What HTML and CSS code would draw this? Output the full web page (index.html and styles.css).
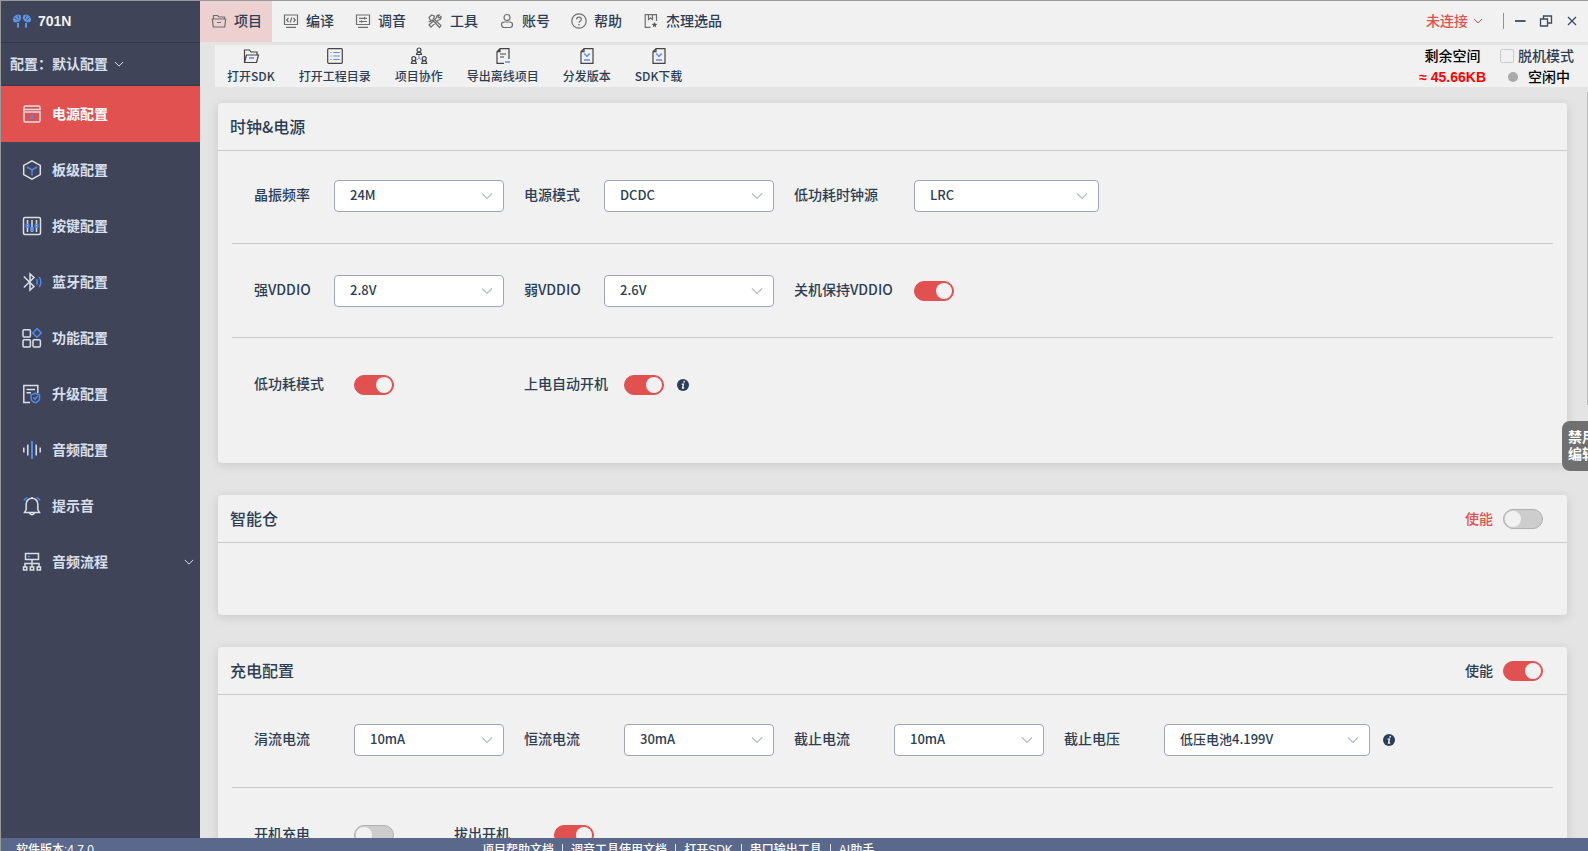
FILE: index.html
```html
<!DOCTYPE html>
<html lang="zh-CN">
<head>
<meta charset="utf-8">
<title>701N</title>
<link rel="stylesheet" href="styles.css">
</head>
<body>
<svg class="sprite" aria-hidden="true">
  <symbol id="chevron" viewBox="0 0 12 12"><path d="M1 3.5 6 8.5 11 3.5" fill="none" stroke="currentColor" stroke-width="1.2"/></symbol>
  <symbol id="info" viewBox="0 0 12 12"><circle cx="6" cy="6" r="6" fill="currentColor"/><path d="M7.3 1.9 6.9 3.6M4.6 5.1H6.4L5.6 9H7.2" fill="none" stroke="#f1f1f1" stroke-width="1.4"/></symbol>
  <symbol id="page-down" viewBox="0 0 18 18"><path d="M6 1.7h9v14.6H3V4.7zM6 1.7v3H3" fill="none" stroke="#444" stroke-width="1.2"/><path d="M6.3 6.5 9 9.5l2.700-3M6 13h6" fill="none" stroke="#5b8def" stroke-width="1.5"/></symbol>
</svg>
<div class="app">
  <aside class="sidebar">
    <div class="brand">
      <svg class="brand-icon" viewBox="0 0 20 16"><g fill="#5a97ea"><path d="M.8 6.500 2 3.500 5 1.500 8.500 2 9.300 5 7.800 8 4.500 9.500 1.800 9z"/><path d="M19.200 6.500 18 3.500 15 1.500 11.500 2 10.700 5 12.200 8 15.500 9.500 18.200 9z"/><path d="M5 10h2v4.500H5zM13 10h2v4.500h-2z"/></g><path d="M2.500 4.500l3 2.500M5.500 2.500 7 5.500M17.500 4.500l-3 2.500M14.500 2.500 13 5.500" stroke="#3f4459" stroke-width=".9"/></svg>
      <span>701N</span>
    </div>
    <button class="profile" type="button"><span>配置：默认配置</span><svg class="chev small"><use href="#chevron"/></svg></button>
    <nav class="side-nav">
      <a class="side-link active" href="#"><svg viewBox="0 0 20 20"><path d="M2 7V3.500Q2 2 3.500 2h13Q18 2 18 3.500V5.500H2M2 8h16v8.500Q18 18 16.500 18h-13Q2 18 2 16.500z"/><path class="bolt" d="M10.500 9.500 7 13.300h2.300v3.200l3.500-4h-2.300z"/></svg><span>电源配置</span></a>
      <a class="side-link" href="#"><svg viewBox="0 0 20 20"><path d="M10 .8 18.300 5.400v9.200L10 19.200 1.700 14.600V5.400z"/><path class="b" d="M5 7l5 3 5-3M10 10v5.500"/></svg><span>板级配置</span></a>
      <a class="side-link" href="#"><svg viewBox="0 0 20 20"><rect x="1.500" y="1.500" width="17" height="17" rx="1.500"/><path d="M5.500 4v12M10 4v12M14.500 4v12"/><path class="b" d="M4.200 8.500h2.600v2.600H4.200zM8.700 12h2.600v2.400H8.700zM13.200 8.500h2.600v2.600h-2.600z"/></svg><span>按键配置</span></a>
      <a class="side-link" href="#"><svg viewBox="0 0 20 20"><path d="M1.800 4.500 12 14.500 8 18V2l4 3.500L1.800 15.500"/><path class="b" d="M14.500 7.200q1.600 2.800 0 5.600M17.300 4.800q3 5.200 0 10.400"/></svg><span>蓝牙配置</span></a>
      <a class="side-link" href="#"><svg viewBox="0 0 20 20"><rect x="1" y="1.800" width="7.400" height="7.200" rx="1.200"/><rect x="1" y="11.800" width="7.400" height="7.200" rx="1.200"/><rect x="11" y="11.800" width="7.400" height="7.200" rx="1.200"/><path class="b" d="M15 .6l4.300 4.300L15 9.200l-4.300-4.300z"/></svg><span>功能配置</span></a>
      <a class="side-link" href="#"><svg viewBox="0 0 20 20"><path d="M8 18.500H1.800V1.500h14V9M4.500 5.500h8.500M4.500 8.700h4.500"/><path class="b" d="M13.300 9.300 17.500 10.700v3.500q0 3-4.200 4.600-4.200-1.600-4.200-4.600v-3.500zM11.300 13.500l1.600 1.600 2.800-3"/></svg><span>升级配置</span></a>
      <a class="side-link" href="#"><svg viewBox="0 0 20 20"><path d="M1.800 7.500v5M5.800 4.500v11M14.200 4.500v11M18.200 7.500v5"/><path class="b" d="M10 1v18" stroke-width="2"/></svg><span>音频配置</span></a>
      <a class="side-link" href="#"><svg viewBox="0 0 20 20"><path d="M2.500 16.500H17.500L15.800 13.500V8A5.800 5.800 0 0 0 4.200 8v5.500zM7.500 17q2.500 3.500 5 0M10 2.200V1"/><path class="b" d="M1.800 4.500 5 1.200M18.200 4.500 15 1.200"/></svg><span>提示音</span></a>
      <a class="side-link" href="#"><svg viewBox="0 0 20 20"><path d="M3.500 1.500h13v6h-13zM10 7.500V15M3 15v-3.500h14V15M1.500 15h3.300v3H1.500zM8.300 15h3.400v3H8.300zM15.200 15h3.300v3h-3.300z"/><path class="b" d="M6 4.500h2"/></svg><span>音频流程</span><svg class="chev small"><use href="#chevron"/></svg></a>
    </nav>
  </aside>
  <div class="main">
    <header class="topbar">
      <nav class="menu">
        <a class="menu-link active" href="#"><svg viewBox="0 0 16 16"><path d="M2.500 6V2.500h4L8 4h5.500v2M1.300 6h13.400l-1 8H2.300zM6 9.500h4"/></svg>项目</a>
        <a class="menu-link" href="#"><svg viewBox="0 0 16 16"><path d="M1.500 2h13v9.500h-13zM3 14.300h10M5.500 5 3.700 7l1.800 2M10.500 5l1.800 2-1.800 2M8.800 4.500l-1.600 5"/></svg>编译</a>
        <a class="menu-link" href="#"><svg viewBox="0 0 16 16"><path d="M1.500 2h13v9.500h-13zM3 14.300h10M4 5.300h8M4 8.500h8M9.500 4v2.500M6.500 7.200v2.500"/></svg>调音</a>
        <a class="menu-link" href="#"><svg viewBox="0 0 16 16"><path d="M2 4.500 4.500 2l3 1-1 2.500 7.500 7-1.500 2-7-7.500-2 .5zM14 3.500l-2 1.500-1-1 1.500-2Q9.500 1.500 9.300 5L2 12l2 2.200 7.300-7.200Q14.500 7 14 3.500zM1.500 9l3-1"/></svg>工具</a>
        <a class="menu-link" href="#"><svg viewBox="0 0 16 16"><circle cx="8" cy="4.500" r="3"/><rect x="2.500" y="9" width="11" height="5.500" rx="2.700"/></svg>账号</a>
        <a class="menu-link" href="#"><svg viewBox="0 0 16 16"><circle cx="8" cy="8" r="7.200"/><path d="M5.700 6.500q0-2.300 2.300-2.300t2.300 2q0 1.300-1.300 2-1 .6-1 1.600M8 11v1.400"/></svg>帮助</a>
        <a class="menu-link" href="#"><svg viewBox="0 0 16 16"><path d="M7.500 14.300H2.200V1.700h11.300V8M5.500 2v4.500l2-1.500 2 1.500V2"/><path d="M11.500 9l.8 1.800 2 .2-1.500 1.300.4 2-1.700-1-1.700 1 .4-2L8.700 11l2-.2z" fill="#555" stroke="none"/></svg>杰理选品</a>
      </nav>
      <div class="window-tools">
        <button class="connect" type="button">未连接<svg class="chev small"><use href="#chevron"/></svg></button>
        <span class="separator"></span>
        <button class="win" type="button" aria-label="最小化"><svg viewBox="0 0 14 14"><path d="M2 7h10.500" stroke-width="1.800"/></svg></button>
        <button class="win" type="button" aria-label="还原"><svg viewBox="0 0 14 14"><path d="M1.500 5h7v7h-7zM4.500 5V2h8v7H8.500"/></svg></button>
        <button class="win" type="button" aria-label="关闭"><svg viewBox="0 0 14 14"><path d="M3 3l8 8M11 3l-8 8"/></svg></button>
      </div>
    </header>
    <div class="toolbar">
      <button class="tool" type="button"><svg viewBox="0 0 18 18"><path d="M2.500 15V3h5l1.500 2h6v3M2.500 15.500 4.500 8h12l-2 7.500z" fill="none" stroke="#444" stroke-width="1.200"/><path d="M7 11h5" stroke="#5b8def" stroke-width="1.500"/></svg>打开SDK</button>
      <button class="tool" type="button"><svg viewBox="0 0 18 18"><rect x="1.700" y="1.700" width="14.600" height="14.600" rx="1" fill="none" stroke="#444" stroke-width="1.200"/><path d="M4.300 5.500h1.200M7.300 5.500h6.400M4.300 9h1.200M7.300 9h6.400M4.300 12.500h1.200M7.300 12.500h6.400" stroke="#5b8def" stroke-width="1.200"/></svg>打开工程目录</button>
      <button class="tool" type="button"><svg viewBox="0 0 18 18"><g fill="none" stroke="#444" stroke-width="1.200"><circle cx="9" cy="3" r="2"/><path d="M6.500 7.500q.4-2.300 2.500-2.300t2.500 2.300zM1.300 16.500q.4-2.800 2.500-2.800t2.500 2.800zM11.700 16.500q.4-2.800 2.500-2.800t2.500 2.800z"/><circle cx="3.800" cy="11.700" r="2"/><circle cx="14.200" cy="11.700" r="2"/></g><path d="M9 8v2.500M9 10.500 7 13M9 10.500l2 2.500" fill="none" stroke="#5b8def"/></svg>项目协作</button>
      <button class="tool" type="button"><svg viewBox="0 0 18 18"><path d="M10 16.300H3V4.700l3-3h9V12M6 1.700v3H3M6 7h6M6 10h4" fill="none" stroke="#444" stroke-width="1.200"/><path d="M11 15h5" stroke="#5b8def" stroke-width="1.500"/></svg>导出离线项目</button>
      <button class="tool" type="button"><svg><use href="#page-down"/></svg>分发版本</button>
      <button class="tool" type="button"><svg><use href="#page-down"/></svg>SDK下载</button>
      <div class="status">
        <div class="space"><span>剩余空间</span><strong>≈ 45.66KB</strong></div>
        <div class="mode">
          <label class="offline"><input type="checkbox">脱机模式</label>
          <div class="idle"><i class="dot"></i>空闲中</div>
        </div>
      </div>
    </div>
    <main class="content">
      <section class="card">
        <header class="card-head"><h2>时钟&amp;电源</h2></header>
        <div class="card-body">
          <div class="row">
            <div class="field"><label for="xosc">晶振频率</label><span class="select medium"><select id="xosc"><option>24M</option></select><svg><use href="#chevron"/></svg></span></div>
            <div class="field"><label for="pmode">电源模式</label><span class="select medium"><select id="pmode"><option>DCDC</option></select><svg><use href="#chevron"/></svg></span></div>
            <div class="field wide-label"><label for="lpclk">低功耗时钟源</label><span class="select large"><select id="lpclk"><option>LRC</option></select><svg><use href="#chevron"/></svg></span></div>
          </div>
          <div class="row">
            <div class="field"><label for="vdds">强VDDIO</label><span class="select medium"><select id="vdds"><option>2.8V</option></select><svg><use href="#chevron"/></svg></span></div>
            <div class="field"><label for="vddw">弱VDDIO</label><span class="select medium"><select id="vddw"><option>2.6V</option></select><svg><use href="#chevron"/></svg></span></div>
            <div class="field wide-label"><label for="keep">关机保持VDDIO</label><input class="toggle" id="keep" type="checkbox" checked></div>
          </div>
          <div class="row">
            <div class="field mid-label"><label for="lowp">低功耗模式</label><span class="slot"><input class="toggle" id="lowp" type="checkbox" checked></span></div>
            <div class="field mid-label"><label for="auto">上电自动开机</label><span class="slot"><input class="toggle" id="auto" type="checkbox" checked><svg class="info"><use href="#info"/></svg></span></div>
          </div>
        </div>
      </section>
      <section class="card">
        <header class="card-head"><h2>智能仓</h2><label class="enable off">使能<input class="toggle" type="checkbox"></label></header>
        <div class="card-body empty"></div>
      </section>
      <section class="card">
        <header class="card-head"><h2>充电配置</h2><label class="enable">使能<input class="toggle" type="checkbox" checked></label></header>
        <div class="card-body">
          <div class="row">
            <div class="field mid-label"><label for="trickle">涓流电流</label><span class="select small"><select id="trickle"><option>10mA</option></select><svg><use href="#chevron"/></svg></span></div>
            <div class="field mid-label"><label for="const">恒流电流</label><span class="select small"><select id="const"><option>30mA</option></select><svg><use href="#chevron"/></svg></span></div>
            <div class="field mid-label"><label for="cutoff">截止电流</label><span class="select small"><select id="cutoff"><option>10mA</option></select><svg><use href="#chevron"/></svg></span></div>
            <div class="field mid-label"><label for="cutv">截止电压</label><span class="select xlarge"><select id="cutv"><option>低压电池4.199V</option></select><svg><use href="#chevron"/></svg></span><svg class="info"><use href="#info"/></svg></div>
          </div>
          <div class="row">
            <div class="field mid-label"><label for="onchg">开机充电</label><span class="slot short"><input class="toggle" id="onchg" type="checkbox"></span></div>
            <div class="field mid-label"><label for="pull">拔出开机</label><span class="slot short"><input class="toggle" id="pull" type="checkbox" checked></span></div>
          </div>
        </div>
      </section>
    </main>
    <span class="scroll-thumb"></span>
    <button class="edit-lock" type="button">禁用<br>编辑</button>
  </div>
  <footer class="statusbar">
    <span class="version">软件版本:4.7.0</span>
    <nav class="foot-links"><a href="#">项目帮助文档</a><a href="#">调音工具使用文档</a><a href="#">打开SDK</a><a href="#">串口输出工具</a><a href="#">AI助手</a></nav>
  </footer>
</div>
</body>
</html>
```
FILE: styles.css
```css
* { box-sizing: border-box; }

body {
  margin: 0;
  overflow: hidden;
  background: #e4e4e4;
  color: #2c3e55;
  font: 500 14px/20px "Liberation Sans", "Noto Sans CJK SC", sans-serif;
}

button, select, input { font: inherit; color: inherit; }
button { padding: 0; border: 0; background: none; cursor: pointer; }
a { color: inherit; text-decoration: none; }
.sprite { display: none; }

.app {
  display: grid;
  grid-template: minmax(0, 1fr) 13px / 199px minmax(0, 1fr);
  height: 100vh;
  border: solid #999;
  border-width: 1px 0 0 1px;
}

.chev { width: 12px; height: 12px; flex: none; }
.chev.small { width: 10px; height: 10px; }

/* Sidebar */
.sidebar { background: #3f4459; color: #d8dfec; font-weight: 700; }
.brand {
  display: flex;
  align-items: center;
  gap: 6px;
  height: 42px;
  padding: 0 0 2px 11px;
  border-bottom: 1px solid #33384a;
  color: #f1f1f1;
}
.brand-icon { width: 20px; height: 16px; }
.profile {
  display: flex;
  align-items: center;
  gap: 6px;
  width: 100%;
  height: 43px;
  padding-left: 9px;
  border-bottom: 1px solid #33384a;
}
.side-link {
  display: flex;
  align-items: center;
  gap: 10px;
  height: 56px;
  padding: 0 6px 0 21px;
}
.side-link > svg:first-child {
  width: 20px;
  height: 20px;
  fill: none;
  stroke: #dcdfe6;
  stroke-width: 1.500;
}
.side-link .b { stroke: #5088ef; }
.side-link .bolt { fill: #5088ef; stroke: none; }
.side-link.active { background: #e1514f; color: #fff; }
.side-link .chev { margin-left: auto; }

/* Main column */
.main {
  position: relative;
  display: flex;
  flex-direction: column;
  min-width: 0;
  overflow: hidden;
}
.topbar {
  display: flex;
  flex: none;
  justify-content: space-between;
  height: 41px;
  background: #f1f1f1;
}
.menu { display: flex; }
.menu-link {
  display: flex;
  align-items: center;
  gap: 7px;
  padding: 0 10px 2px 11px;
}
.menu-link.active { background: #edd0d0; }
.menu-link svg {
  width: 16px;
  height: 16px;
  fill: none;
  stroke: #6e6e6e;
  stroke-width: 1.200;
}
.window-tools { display: flex; align-items: center; padding: 0 9px 2px 0; }
.connect { display: flex; align-items: center; gap: 5px; color: #e1514f; }
.separator { width: 1px; height: 16px; margin: 0 9px 0 20px; background: #8a93a2; }
.win { width: 14px; height: 14px; margin-right: 12px; }
.win:last-child { margin-right: 0; }
.win svg { display: block; fill: none; stroke: #3b4b62; stroke-width: 1.300; }

.toolbar {
  display: flex;
  flex: none;
  gap: 24px;
  height: 42px;
  margin: 3px 0 0 15px;
  padding: 2px 14px 0 12px;
  background: #f1f1f1;
  white-space: nowrap;
}
.tool {
  display: flex;
  flex-direction: column;
  align-items: center;
  gap: 1px;
  font-family: "Noto Sans CJK SC", sans-serif;
  font-size: 12px;
}
.tool svg { width: 18px; height: 18px; }
.status { display: flex; gap: 14px; margin: -1px 0 0 auto; color: #000; }
.space { display: flex; flex-direction: column; align-items: center; gap: 1px; }
.space strong { color: #f00; }
.mode { display: flex; flex-direction: column; gap: 1px; }
.offline { display: flex; align-items: center; gap: 4px; color: #2c3e55; }
.offline input {
  appearance: none;
  width: 14px;
  height: 14px;
  margin: 0;
  border: 1px solid #ccc;
  border-radius: 2px;
}
.idle { display: flex; align-items: center; gap: 10px; padding-left: 8px; }
.dot { width: 10px; height: 10px; border-radius: 50%; background: #aaa; }

/* Cards */
.content {
  display: flex;
  flex: 1;
  flex-direction: column;
  gap: 32px;
  min-height: 0;
  padding: 16px 21px 0 18px;
  overflow: hidden;
}
.card {
  flex: none;
  border-radius: 4px;
  background: #f1f1f1;
  box-shadow: 0 2px 12px rgba(0, 0, 0, .12);
}
.card-head {
  display: flex;
  align-items: center;
  justify-content: space-between;
  height: 48px;
  padding: 0 24px 0 12px;
  border-bottom: 1px solid #ccc;
}
.card-head h2 {
  margin: 0;
  padding-bottom: 2px;
  font-family: "Noto Sans CJK SC", sans-serif;
  font-size: 16px;
  font-weight: 500;
}
.enable { display: flex; align-items: center; gap: 10px; }
.enable.off { color: #e1514f; }
.card-body { padding: 0 14px 32px; }
.card-body.empty { padding: 36px 14px; }
.row {
  display: flex;
  gap: 20px;
  padding: 29px 22px 31px;
  border-bottom: 1px solid #ccc;
}
.row + .row { padding: 31px 22px 30px; }
.row:last-child { border-bottom: 0; }
.field { display: flex; align-items: center; height: 32px; white-space: nowrap; }
.field label {
  width: 80px;
  padding-bottom: 4px;
  font-family: "Noto Sans CJK SC", sans-serif;
}
.mid-label label { width: 100px; }
.wide-label label { width: 120px; }
.slot { display: flex; align-items: center; width: 150px; }
.slot.short { width: 80px; }
.info { width: 12px; height: 12px; margin-left: 13px; }

.select { position: relative; height: 32px; }
.select select {
  appearance: none;
  width: 100%;
  height: 32px;
  padding: 0 32px 2px 15px;
  border: 1px solid #a0a5bf;
  border-radius: 4px;
  background: #fff;
  font-family: "Noto Sans CJK SC", sans-serif;
  font-size: 13px;
}
.select svg {
  position: absolute;
  top: 10px;
  right: 11px;
  width: 12px;
  height: 12px;
  color: #b4b9cf;
  pointer-events: none;
}
.select.small { width: 150px; }
.select.medium { width: 170px; }
.select.large { width: 185px; }
.select.xlarge { width: 206px; }

.toggle {
  appearance: none;
  display: flex;
  flex: none;
  align-items: center;
  width: 40px;
  height: 20px;
  margin: 0;
  padding: 0 1px;
  border: 1px solid #b0b0b0;
  border-radius: 10px;
  background: #cdcdcd;
}
.toggle::before {
  content: "";
  width: 16px;
  height: 16px;
  border-radius: 50%;
  background: #f1f1f1;
}
.toggle:checked { justify-content: flex-end; border-color: #e1514f; background: #e1514f; }

/* Overlays at the window edge */
.scroll-thumb {
  position: absolute;
  top: 91px;
  right: 0;
  width: 1px;
  height: 313px;
  background: #bbb;
}
.edit-lock {
  position: absolute;
  top: 420px;
  right: -14px;
  width: 40px;
  height: 50px;
  border-radius: 8px;
  background: #707070;
  color: #fff;
  font-weight: 700;
  line-height: 17px;
}

/* Status bar */
.statusbar {
  display: flex;
  grid-column: 1 / -1;
  overflow: hidden;
  background: #5a698b;
  color: #fff;
  font-size: 12px;
  line-height: 24px;
  white-space: nowrap;
}
.version { flex: 0 0 30%; padding-left: 15px; }
.foot-links { display: flex; padding-left: 5px; }
.foot-links a + a::before {
  content: "";
  display: inline-block;
  width: 1px;
  height: 12px;
  margin: 0 8px;
  background: #dfe3ec;
  vertical-align: -2px;
}
```
